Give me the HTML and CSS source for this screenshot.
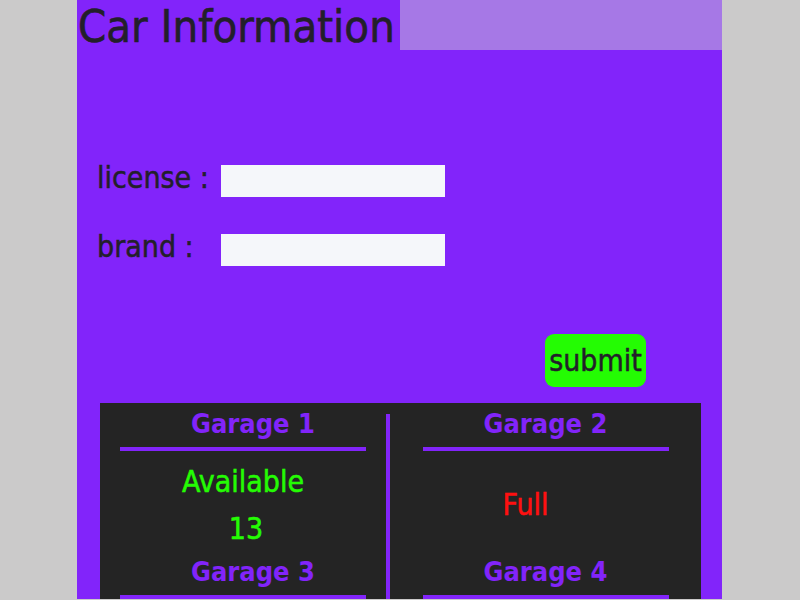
FILE: index.html
```html
<!DOCTYPE html>
<html>
<head>
<meta charset="utf-8">
<link rel="stylesheet" href="styles.css">
</head>
<body>
<div class="page">
  <div class="header">
    <h1 class="title">Car Information</h1>
    <div class="header-fill"></div>
  </div>
  <form class="form">
    <label class="label" for="license">license :</label>
    <input class="field" id="license" type="text">
    <label class="label" for="brand">brand :</label>
    <input class="field" id="brand" type="text">
  </form>
  <div class="actions">
    <button class="submit" type="button">submit</button>
  </div>
  <div class="garages">
    <div class="col">
      <div class="garage">
        <div class="g-title g-title-left">Garage 1</div>
        <div class="g-bar"></div>
        <div class="g-body">
          <div class="ok">Available</div>
          <div class="ok count">13</div>
        </div>
      </div>
      <div class="garage">
        <div class="g-title g-title-left">Garage 3</div>
        <div class="g-bar"></div>
      </div>
    </div>
    <div class="divider"></div>
    <div class="col">
      <div class="garage">
        <div class="g-title">Garage 2</div>
        <div class="g-bar"></div>
        <div class="g-body">
          <div class="full">Full</div>
        </div>
      </div>
      <div class="garage">
        <div class="g-title">Garage 4</div>
        <div class="g-bar"></div>
      </div>
    </div>
  </div>
</div>
</body>
</html>
```
FILE: styles.css
```css
html, body {
  margin: 0;
  padding: 0;
}
body {
  background: #cbcaca;
  font-family: "DejaVu Sans", sans-serif;
  font-stretch: condensed;
  color: #231f2a;
}
.page {
  width: 645px;
  height: 599px;
  margin-left: 77px;
  background: #8224fa;
  display: flex;
  flex-direction: column;
}
.header {
  display: flex;
  height: 50px;
}
.title {
  margin: 0;
  font-size: 45px;
  font-weight: normal;
  line-height: 47px;
  background: #8224fa;
  padding: 3px 5px 0 1px;
  white-space: nowrap;
  -webkit-text-stroke: 0.6px #231f2a;
}
.header-fill {
  flex: 1;
  background: #a678e6;
}
.form {
  display: grid;
  grid-template-columns: 124px 224px;
  row-gap: 37px;
  align-items: start;
  margin-top: 115px;
  padding-left: 20px;
}
.label {
  font-size: 30px;
  line-height: 26px;
  -webkit-text-stroke: 0.5px #231f2a;
}
.field {
  width: 224px;
  height: 32px;
  box-sizing: border-box;
  border: none;
  background: #f5f7fa;
  margin: 0;
  padding: 0;
}
.actions {
  display: flex;
  padding-left: 468px;
  margin-top: 68px;
}
.submit {
  width: 101px;
  height: 53px;
  border: none;
  border-radius: 9px;
  background: #24fc03;
  color: #231f2a;
  font-family: "DejaVu Sans", sans-serif;
  font-stretch: condensed;
  font-size: 30px;
  padding: 0;
  -webkit-text-stroke: 0.5px #231f2a;
}
.garages {
  margin: 16px 21px 0 23px;
  background: #242424;
  display: grid;
  grid-template-columns: 286px 4px 1fr;
  flex: 1;
}
.divider {
  background: #8224fa;
  margin-top: 11px;
  margin-bottom: -2px;
}
.col {
  display: flex;
  flex-direction: column;
  align-items: center;
  padding-top: 3px;
}
.garage {
  width: 246px;
  display: flex;
  flex-direction: column;
}
.g-title {
  font-size: 27px;
  line-height: 36px;
  text-align: center;
  color: #8224fa;
  font-weight: bold;
}
.g-title-left {
  padding-left: 20px;
}
.g-bar {
  height: 4px;
  background: #8224fa;
  margin-top: 5px;
}
.g-body {
  height: 98px;
  padding-top: 5px;
  display: flex;
  flex-direction: column;
  justify-content: center;
  align-items: center;
  gap: 11px;
  font-size: 30px;
  line-height: 36px;
}
.ok {
  color: #24fc03;
  -webkit-text-stroke: 0.5px #24fc03;
}
.count {
  padding-left: 6px;
}
.full {
  color: #ff1010;
  padding-right: 40px;
  -webkit-text-stroke: 0.5px #ff1010;
}
```
